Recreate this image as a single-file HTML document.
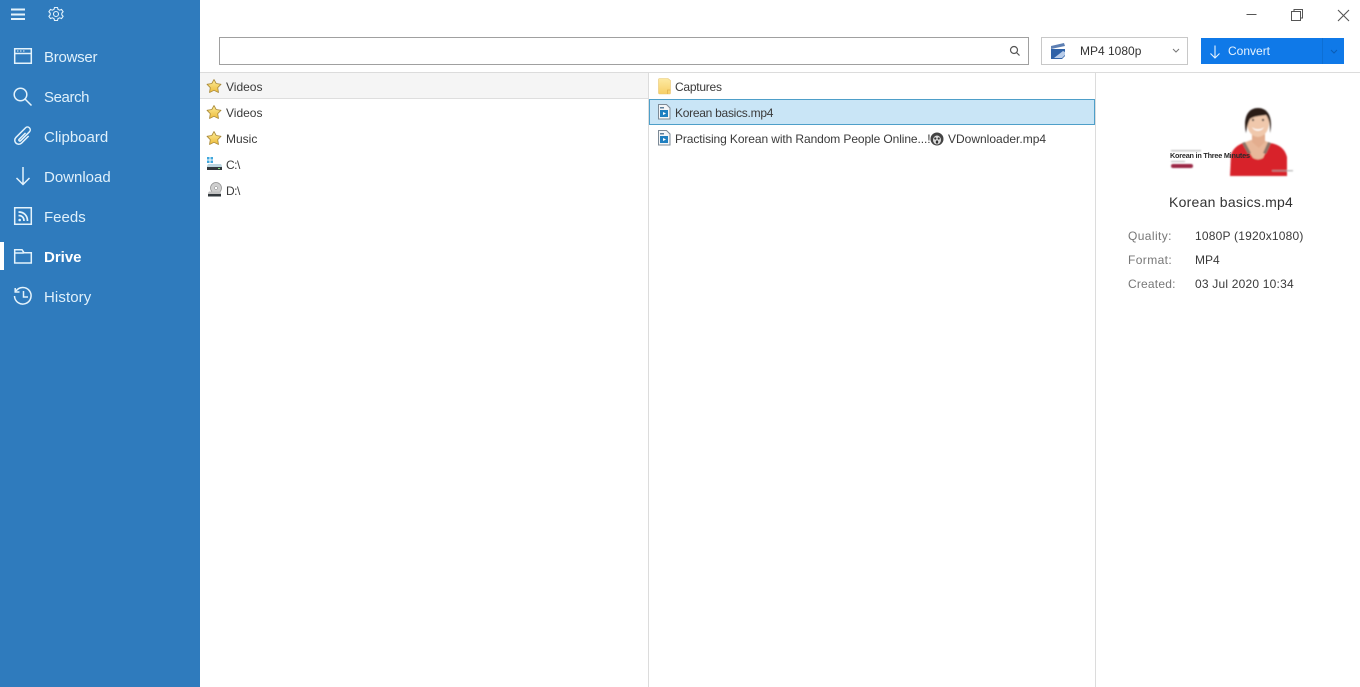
<!DOCTYPE html>
<html><head><meta charset="utf-8"><style>
html,body{margin:0;padding:0;width:1360px;height:687px;overflow:hidden;background:#fff;font-family:"Liberation Sans","DejaVu Sans",sans-serif}
.a{position:absolute}
.t{position:absolute;white-space:nowrap;color:#3a3a3a;font-size:12px;line-height:16px}
.n{position:absolute;left:44px;color:#dff0fb;font-size:15px;line-height:20px;white-space:nowrap}
svg{position:absolute;overflow:visible}
.g{color:#777}
</style></head><body>
<div class="a" style="left:0;top:0;width:200px;height:687px;background:#2f7bbd"></div>
<div class="a" style="left:0;top:242px;width:4px;height:28px;background:#fff"></div>

<svg style="left:0;top:0" width="200" height="320" fill="none" stroke="#e4f3fc" stroke-width="1.500">
<path d="M11 9.500h14M11 14.500h14M11 19h14" stroke-width="1.900"/>
<g stroke-width="1.100"><circle cx="56" cy="14" r="2.500"/><path d="M54.500 7.500h3l.5 1.900 1.700.8 1.800-.8 1.600 2.300-1.300 1.400v1.800l1.300 1.400-1.600 2.300-1.800-.8-1.700.8-.5 1.900h-3l-.5-1.900-1.700-.8-1.800.8-1.600-2.300 1.300-1.400v-1.800l-1.300-1.400 1.600-2.300 1.800.8 1.700-.8z"/></g>
<path d="M14.700 48.700h16.600v14.600H14.700zM15 53.500h16"/><path d="M17 51h1.500M20 51h1.500M23 51h1.500" stroke-width="1"/>
<circle cx="20.500" cy="94.500" r="6.300"/><path d="M25 99l6.500 6.500"/>
<path d="M27 132V142a4 4 0 0 1-8 0V128.500a2.800 2.800 0 0 1 5.600 0V141a1 1 0 0 1-2 0V132" transform="rotate(45 23 136)"/>
<path d="M23 167v17.500M16.500 178l6.500 6.500 6.500-6.500"/>
<path d="M14.700 207.700h16.600v16.600H14.700z"/><path d="M18.500 212c5.500 0 9 3.500 9 9M18.500 215.500c3.500 0 5.500 2 5.500 5.500" stroke-width="1.700"/><circle cx="19.700" cy="220" r="1.300" fill="#e4f3fc" stroke="none"/>
<path d="M14.700 263V249.700H22l2 3h7.300V263zM14.700 253h9"/>
<path d="M16 291a8.300 8.300 0 1 1-1.500 5"/><path d="M23.500 291v6h4.500M15.200 288v4h4.300" />
</svg>
<div class="n" style="top:48px;letter-spacing:-.25px">Browser</div>
<div class="n" style="top:88px;letter-spacing:-.4px">Search</div>
<div class="n" style="top:128px">Clipboard</div>
<div class="n" style="top:168px">Download</div>
<div class="n" style="top:208px">Feeds</div>
<div class="n" style="top:248px;font-weight:bold;color:#fff">Drive</div>
<div class="n" style="top:288px;letter-spacing:.1px">History</div>

<svg style="left:1240px;top:0" width="120" height="30" fill="none" stroke="#555" stroke-width="1">
<path d="M6.500 14.500h10"/><path d="M51.500 11.500h9v9h-9zM54 11.500V9.500h8.500V18h-2"/>
<path d="M98 10l11 11M109 10L98 21" stroke-width="1.100"/>
</svg>

<div class="a" style="left:219px;top:37px;width:808px;height:26px;border:1px solid #a0a0a0;background:#fff"></div>
<svg style="left:1009px;top:45px" width="12" height="12" fill="none" stroke="#555" stroke-width="1.200"><circle cx="5" cy="5" r="3.500"/><path d="M7.500 7.500l3 3"/></svg>

<div class="a" style="left:1041px;top:37px;width:145px;height:26px;border:1px solid #c8c8c8;background:#fff"></div>
<svg style="left:1050px;top:42px" width="18" height="18"><path d="M1 7h14v7l-3 3H1z" fill="#2f62a8"/><path d="M1 4l13-3 1 3-14 3z" fill="#5d7fb3"/><path d="M4 16l9-7 2 1v3l-3 3z" fill="#b9cdea"/></svg>
<div class="t" style="left:1080px;top:43px;color:#333">MP4 1080p</div>
<svg style="left:1172px;top:48px" width="10" height="6" fill="none" stroke="#777"><path d="M1 1l3 3 3-3"/></svg>

<div class="a" style="left:1201px;top:38px;width:143px;height:26px;background:#0f79e8"></div>
<div class="a" style="left:1322px;top:38px;width:1px;height:26px;background:#0d6fd4"></div>
<svg style="left:1209px;top:45px" width="14" height="14" fill="none" stroke="#e6f3ff" stroke-width="1.100"><path d="M6 0.500v12.500M1.500 8.500L6 13l4.500-4.500"/></svg>
<div class="t" style="left:1228px;top:43px;color:#e6f3ff">Convert</div>
<svg style="left:1330px;top:49px" width="10" height="6" fill="none" stroke="#0a5cb4"><path d="M1 1l3 3 3-3"/></svg>

<div class="a" style="left:200px;top:72px;width:1160px;height:1px;background:#dcdcdc"></div>
<div class="a" style="left:648px;top:72px;width:1px;height:615px;background:#dcdcdc"></div>
<div class="a" style="left:1095px;top:72px;width:1px;height:615px;background:#dcdcdc"></div>
<div class="a" style="left:200px;top:73px;width:448px;height:25px;background:#f5f5f5;border-bottom:1px solid #dedede"></div>

<svg width="0" height="0" style="position:absolute"><defs>
<linearGradient id="s" x1="0" y1="0" x2="0" y2="1"><stop offset="0" stop-color="#fcec9a"/><stop offset="1" stop-color="#eebc3a"/></linearGradient>
<linearGradient id="f" x1="0" y1="0" x2="0" y2="1"><stop offset="0" stop-color="#fdeaa3"/><stop offset="1" stop-color="#f7cf66"/></linearGradient>
</defs></svg>
<svg style="left:206px;top:78px" width="16" height="16"><path d="M8 1.500l2.200 4 4.800.8-3.300 3.400.8 4.800L8 12.300l-4.500 2.200.8-4.800L1 6.300l4.800-.8z" fill="url(#s)" stroke="#a98a3a" stroke-width=".8" stroke-linejoin="round"/></svg>
<svg style="left:206px;top:104px" width="16" height="16"><path d="M8 1.500l2.200 4 4.800.8-3.300 3.400.8 4.800L8 12.300l-4.500 2.200.8-4.800L1 6.300l4.800-.8z" fill="url(#s)" stroke="#a98a3a" stroke-width=".8" stroke-linejoin="round"/></svg>
<svg style="left:206px;top:130px" width="16" height="16"><path d="M8 1.500l2.200 4 4.800.8-3.300 3.400.8 4.800L8 12.300l-4.500 2.200.8-4.800L1 6.300l4.800-.8z" fill="url(#s)" stroke="#a98a3a" stroke-width=".8" stroke-linejoin="round"/></svg>
<svg style="left:206px;top:156px" width="16" height="16"><path d="M1 1h2.500v2.500H1zM4.500 1H7v2.500H4.500zM1 4.500h2.500V7H1zM4.500 4.500H7V7H4.500z" fill="#3fa7dc"/><path d="M1 10l1-2h13l1 2v3H1z" fill="#bcd6e0"/><rect x="1" y="11" width="15" height="3" fill="#33393d"/><rect x="12" y="12" width="2" height="1" fill="#7fe07f"/></svg>
<svg style="left:206px;top:182px" width="16" height="16"><ellipse cx="10" cy="6" rx="5.500" ry="5.500" fill="#cfcfcf" stroke="#8c8c8c" stroke-width=".7"/><circle cx="10" cy="6" r="1.500" fill="#fff" stroke="#888" stroke-width=".5"/><path d="M2 11l1-1.500h11l1 1.500v1.500H2z" fill="#c2c2c2"/><rect x="2" y="12" width="13" height="2.500" fill="#33393d"/></svg>
<div class="t" style="left:226px;top:79px">Videos</div>
<div class="t" style="left:226px;top:105px">Videos</div>
<div class="t" style="left:226px;top:131px">Music</div>
<div class="t" style="left:226px;top:157px;letter-spacing:-.5px">C:\</div>
<div class="t" style="left:226px;top:183px;letter-spacing:-.5px">D:\</div>

<div class="a" style="left:649px;top:99px;width:444px;height:24px;background:#c9e5f6;border:1px solid #4e9fc9"></div>
<svg style="left:658px;top:78px" width="14" height="17"><path d="M.5 1.500a1 1 0 0 1 1-1h8.500l2.500 2v12.500a1 1 0 0 1-1 1h-10a1 1 0 0 1-1-1z" fill="url(#f)" stroke="#e8c77a" stroke-width=".6"/><path d="M9.500 16v-4h3" fill="none" stroke="#e0b350" stroke-width=".8"/></svg>
<svg style="left:658px;top:104px" width="13" height="16"><path d="M.5.500h8l3.500 3.500v11H.5z" fill="#f4f6f8" stroke="#7d8a96"/><rect x="2" y="6" width="8" height="7" fill="#1f7fc0"/><path d="M5 8l3 1.500-3 1.500z" fill="#fff"/><rect x="2" y="3" width="4" height="1.500" fill="#5c7f9c"/></svg>
<svg style="left:658px;top:130px" width="13" height="16"><path d="M.5.500h8l3.500 3.500v11H.5z" fill="#f4f6f8" stroke="#7d8a96"/><rect x="2" y="6" width="8" height="7" fill="#1f7fc0"/><path d="M5 8l3 1.500-3 1.500z" fill="#fff"/><rect x="2" y="3" width="4" height="1.500" fill="#5c7f9c"/></svg>
<div class="t" style="left:675px;top:79px;letter-spacing:-.25px">Captures</div>
<div class="t" style="left:675px;top:105px;letter-spacing:-.27px">Korean basics.mp4</div>
<div class="t" style="left:675px;top:131px;letter-spacing:-.1px">Practising Korean with Random People Online...!</div>
<svg style="left:930px;top:132px" width="14" height="14"><circle cx="7" cy="7" r="6.500" fill="#444"/><ellipse cx="7" cy="8" rx="4" ry="4.500" fill="#ddd"/><circle cx="5.300" cy="6.500" r="1.100" fill="#333"/><circle cx="8.700" cy="6.500" r="1.100" fill="#333"/><ellipse cx="7" cy="10" rx="1.200" ry="1.600" fill="#333"/></svg>
<div class="t" style="left:948px;top:131px">VDownloader.mp4</div>

<svg style="left:1150px;top:95px" width="160" height="90">
<defs><filter id="b" x="-20%" y="-20%" width="140%" height="140%"><feGaussianBlur stdDeviation=".7"/></filter></defs>
<g filter="url(#b)">
<path d="M93 48l8-3h12l7 3-8 17h-11z" fill="#e8b89a"/>
<path d="M80 81L81 60Q83 52 93 48L103 63Q108 66 113 63L120 48Q134 50 137 62L137 81z" fill="#d8202b"/>
<path d="M92 48l3-1 6 11-3 1zM121 48l-3-1-5 11 3 1z" fill="#8a7468"/>
<path d="M102 33h13v14l-6 6-7-6z" fill="#e3ad8e"/>
<ellipse cx="108" cy="28" rx="11" ry="14" fill="#f0c8ac"/>
<path d="M96 38c-3-14 1-25 12-25s15 11 12 25c0-9-1-14-4-18-6 1-12 1-16 4-2 4-3 8-4 14z" fill="#2a1c18"/>
<path d="M102 32c3 3 9 3 12 0-2 5-10 5-12 0z" fill="#fff"/>
<circle cx="103" cy="25" r="1.100" fill="#222"/><circle cx="113" cy="25" r="1.100" fill="#222"/>
<rect x="21" y="55" width="30" height="1.300" fill="#bbb"/>
<rect x="21" y="66" width="14" height="1" fill="#bbb"/>
<rect x="21" y="69" width="22" height="4" rx="2" fill="#9a2845"/>
<rect x="122" y="75" width="21" height="1.500" fill="#aaa" opacity=".7"/>
</g>
<text x="20" y="63" font-family="Liberation Sans" font-size="7.300" font-weight="bold" fill="#2a2a2a" textLength="80">Korean in Three Minutes</text>
</svg>

<div class="t" style="left:1169px;top:193px;font-size:14px;line-height:18px;color:#333;letter-spacing:.25px">Korean basics.mp4</div>
<div class="t g" style="left:1128px;top:228px;letter-spacing:.4px">Quality:</div>
<div class="t" style="left:1195px;top:228px;letter-spacing:.2px">1080P (1920x1080)</div>
<div class="t g" style="left:1128px;top:252px;letter-spacing:.4px">Format:</div>
<div class="t" style="left:1195px;top:252px">MP4</div>
<div class="t g" style="left:1128px;top:276px;letter-spacing:.2px">Created:</div>
<div class="t" style="left:1195px;top:276px;letter-spacing:.2px">03 Jul 2020 10:34</div>
</body></html>
